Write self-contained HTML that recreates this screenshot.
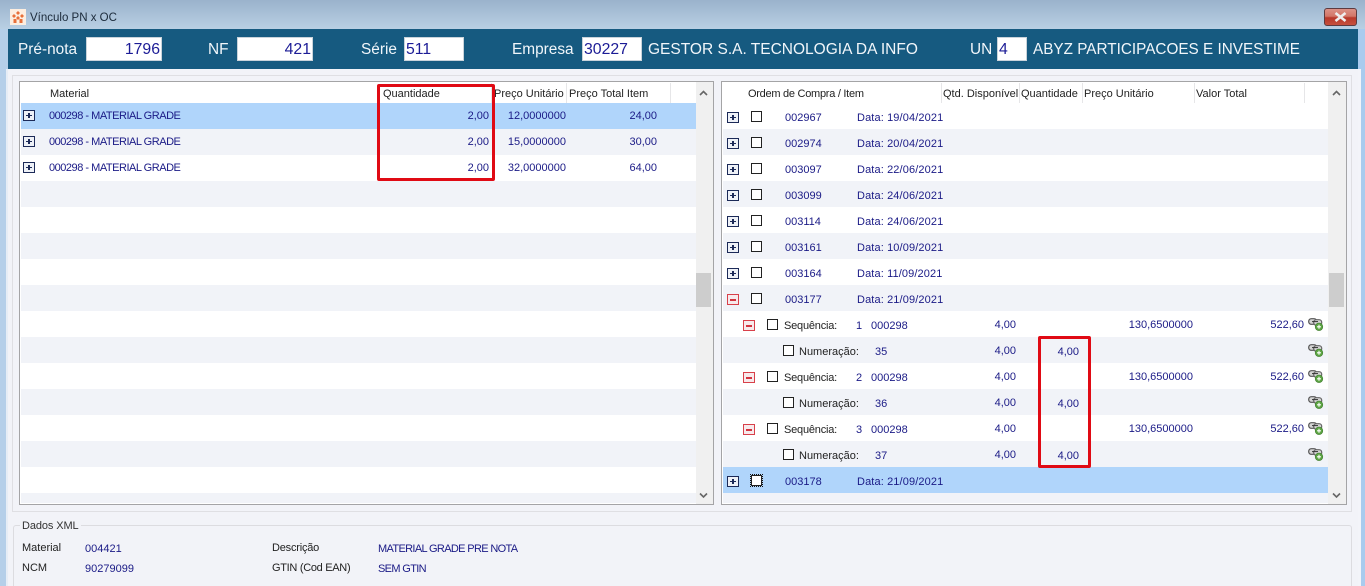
<!DOCTYPE html>
<html style="overflow:hidden;height:586px"><head><meta charset="utf-8"><style>
html,body{margin:0;padding:0}
body{width:1365px;height:586px;overflow:hidden;position:relative;background:#f2f3f8;font-family:"Liberation Sans",sans-serif;font-size:11px;color:#1a1a86}
div,span,svg{position:absolute;box-sizing:border-box}
.t{white-space:nowrap;line-height:16px;height:16px;margin-top:1px}
.l{color:#222}
.r{text-align:right}
.h{color:#f1f6fa;font-size:15.4px;line-height:20px;height:20px;white-space:nowrap;top:40px}
.i{background:#fff;border:1px solid #c9d3da;top:37px;height:24px;font-size:15.8px;line-height:24px;color:#1c1c96;padding:0 1px;white-space:nowrap}
.m{letter-spacing:-.48px}
.m2{letter-spacing:-.65px}
.d{letter-spacing:.12px}
.sep{width:1px;background:#e6e6e8;top:83px;height:20px}
.box{width:12px;height:11px;border:1px solid #1c2a58;background:#eef1f7}
.box:before{content:"";position:absolute;left:2px;right:2px;top:4px;height:1px;border-top:1px solid #1c2a58}
.box.p:after{content:"";position:absolute;top:2px;bottom:2px;left:4px;width:2px;background:#1c2a58}
.box.n{border-color:#d8404a;background:#f7eaec}
.box.n:before{left:2px;right:2px;height:2px;border:0;background:#d2343f}
.c{width:11px;height:11px;border:1px solid #222;background:#fff}
.red{border:3px solid #e00a14;border-radius:2px}
</style></head><body>
<svg width="0" height="0" style="left:0;top:0"><defs>
<g id="lk"><rect x=".7" y=".7" width="8" height="5.6" rx="2.6" fill="#d4d4d4" stroke="#555" stroke-width="1.2"/><rect x="5.7" y="1.7" width="8" height="5.6" rx="2.6" fill="#d4d4d4" stroke="#666" stroke-width="1.2"/><path d="M4 3.6h6" stroke="#333" stroke-width="1"/><circle cx="11" cy="8.8" r="3.8" fill="#5da544" stroke="#3f7d2e" stroke-width=".6"/><path d="M9 8.8h4M11 6.8v4" stroke="#fff" stroke-width="1.1"/></g>
<path id="up" d="M1 5l3.5-3.5L8 5" fill="none" stroke="#666" stroke-width="1.6"/>
<path id="dn" d="M1 1.500L4.500 5 8 1.500" fill="none" stroke="#666" stroke-width="1.6"/>
</defs></svg>

<div style="left:0;top:0;width:1365px;height:30px;background:linear-gradient(#9ab2cc,#bad0e4)"></div>
<div style="left:0;top:29px;width:8px;height:557px;background:#b5cfe9"></div>
<div style="left:1358px;top:29px;width:7px;height:557px;background:#a9cbee"></div>
<div style="left:6px;top:69px;width:2px;height:517px;background:#e6edf6"></div>
<div style="left:1358px;top:69px;width:3px;height:517px;background:#f3f4f9"></div>

<svg style="left:10px;top:9px" width="16" height="16" viewBox="0 0 16 16"><rect width="16" height="16" fill="#fdeee0"/><path d="M8 2l2 2-2 2-2-2zM4 5l2 2-2 2-2-2zM12 5l2 2-2 2-2-2zM8 7l2 2-2 2-2-2zM3.500 10h3v4h-3zM9.500 10h3v4h-3z" fill="#e8703a"/></svg>
<div class="t l" style="left:30px;top:9px;font-size:11.5px;color:#1b2a3a">Vínculo PN x OC</div>

<div style="left:1324px;top:8px;width:33px;height:18px;border:1px solid #5d3b40;border-radius:3px;background:linear-gradient(#dc9186 0,#d27668 45%,#b8382a 55%,#c6503e 100%)"></div>
<svg style="left:1333px;top:11px" width="15" height="12" viewBox="0 0 15 12"><path d="M2.500 2L12.500 10M12.500 2L2.500 10" stroke="#eee" stroke-width="2.6"/></svg>

<div style="left:8px;top:29px;width:1350px;height:40px;background:#165a80"></div>
<div class="h" style="left:18px">Pré-nota</div>
<div class="i r" style="left:86px;width:76px">1796</div>
<div class="h" style="left:208px">NF</div>
<div class="i r" style="left:237px;width:76px">421</div>
<div class="h" style="left:361px">Série</div>
<div class="i" style="left:404px;width:60px">511</div>
<div class="h" style="left:512px">Empresa</div>
<div class="i" style="left:582px;width:60px">30227</div>
<div class="h" style="left:648px;font-size:15.5px">GESTOR S.A. TECNOLOGIA DA INFO</div>
<div class="h" style="left:970px">UN</div>
<div class="i" style="left:997px;width:30px">4</div>
<div class="h" style="left:1033px;font-size:15.3px">ABYZ PARTICIPACOES E INVESTIME</div>

<div style="left:12px;top:75px;width:1340px;height:437px;border:1px solid #dfdfe3"></div>

<div style="left:19px;top:81px;width:695px;height:424px;border:1px solid #a4a4a6;background:#fff"></div>
<div style="left:21px;top:103px;width:675px;height:400px;background:repeating-linear-gradient(#fff 0,#fff 26px,#f1f3f8 26px,#f1f3f8 52px)"></div>
<div style="left:21px;top:103px;width:675px;height:26px;background:#b0d5fb"></div>
<div style="left:696px;top:82px;width:17px;height:422px;background:#f0f0f0"></div>
<div style="left:696px;top:273px;width:15px;height:34px;background:#cdcdcd"></div>
<svg style="left:699px;top:90px" width="9" height="7"><use href="#up"/></svg>
<svg style="left:699px;top:492px" width="9" height="7"><use href="#dn"/></svg>
<div class="sep" style="left:491px"></div><div class="sep" style="left:566px"></div><div class="sep" style="left:670px"></div>
<div class="t l" style="left:50px;top:85px">Material</div>
<div class="t l" style="left:383px;top:85px">Quantidade</div>
<div class="t l" style="left:494px;top:85px">Preço Unitário</div>
<div class="t l" style="left:569px;top:85px">Preço Total Item</div>

<div class="box p" style="left:23px;top:110px"></div>
<div class="t m" style="left:49px;top:107px">000298 - MATERIAL GRADE</div>
<div class="t r" style="left:430px;width:59px;top:107px">2,00</div>
<div class="t r" style="left:500px;width:66px;top:107px">12,0000000</div>
<div class="t r" style="left:600px;width:57px;top:107px">24,00</div>
<div class="box p" style="left:23px;top:136px"></div>
<div class="t m" style="left:49px;top:133px">000298 - MATERIAL GRADE</div>
<div class="t r" style="left:430px;width:59px;top:133px">2,00</div>
<div class="t r" style="left:500px;width:66px;top:133px">15,0000000</div>
<div class="t r" style="left:600px;width:57px;top:133px">30,00</div>
<div class="box p" style="left:23px;top:162px"></div>
<div class="t m" style="left:49px;top:159px">000298 - MATERIAL GRADE</div>
<div class="t r" style="left:430px;width:59px;top:159px">2,00</div>
<div class="t r" style="left:500px;width:66px;top:159px">32,0000000</div>
<div class="t r" style="left:600px;width:57px;top:159px">64,00</div>

<div class="red" style="left:377px;top:84px;width:118px;height:97px"></div>

<div style="left:721px;top:81px;width:626px;height:424px;border:1px solid #a4a4a6;background:#fff"></div>
<div style="left:723px;top:103px;width:605px;height:400px;background:repeating-linear-gradient(#fff 0,#fff 26px,#f1f3f8 26px,#f1f3f8 52px)"></div>
<div style="left:723px;top:467px;width:605px;height:26px;background:#b0d5fb"></div>
<div style="left:1328px;top:82px;width:18px;height:422px;background:#f0f0f0"></div>
<div style="left:1329px;top:273px;width:15px;height:34px;background:#cdcdcd"></div>
<svg style="left:1332px;top:90px" width="9" height="7"><use href="#up"/></svg>
<svg style="left:1332px;top:492px" width="9" height="7"><use href="#dn"/></svg>
<div class="sep" style="left:941px"></div><div class="sep" style="left:1019px"></div><div class="sep" style="left:1082px"></div><div class="sep" style="left:1194px"></div><div class="sep" style="left:1304px"></div>
<div class="t l" style="left:748px;top:85px;letter-spacing:-.27px">Ordem de Compra / Item</div>
<div class="t l" style="left:943px;top:85px">Qtd. Disponível</div>
<div class="t l" style="left:1021px;top:85px">Quantidade</div>
<div class="t l" style="left:1084px;top:85px">Preço Unitário</div>
<div class="t l" style="left:1196px;top:85px">Valor Total</div>

<div class="box p" style="left:727px;top:112px"></div><div class="c" style="left:751px;top:111px"></div><div class="t" style="left:785px;top:109px">002967</div><div class="t d" style="left:857px;top:109px">Data: 19/04/2021</div>
<div class="box p" style="left:727px;top:138px"></div><div class="c" style="left:751px;top:137px"></div><div class="t" style="left:785px;top:135px">002974</div><div class="t d" style="left:857px;top:135px">Data: 20/04/2021</div>
<div class="box p" style="left:727px;top:164px"></div><div class="c" style="left:751px;top:163px"></div><div class="t" style="left:785px;top:161px">003097</div><div class="t d" style="left:857px;top:161px">Data: 22/06/2021</div>
<div class="box p" style="left:727px;top:190px"></div><div class="c" style="left:751px;top:189px"></div><div class="t" style="left:785px;top:187px">003099</div><div class="t d" style="left:857px;top:187px">Data: 24/06/2021</div>
<div class="box p" style="left:727px;top:216px"></div><div class="c" style="left:751px;top:215px"></div><div class="t" style="left:785px;top:213px">003114</div><div class="t d" style="left:857px;top:213px">Data: 24/06/2021</div>
<div class="box p" style="left:727px;top:242px"></div><div class="c" style="left:751px;top:241px"></div><div class="t" style="left:785px;top:239px">003161</div><div class="t d" style="left:857px;top:239px">Data: 10/09/2021</div>
<div class="box p" style="left:727px;top:268px"></div><div class="c" style="left:751px;top:267px"></div><div class="t" style="left:785px;top:265px">003164</div><div class="t d" style="left:857px;top:265px">Data: 11/09/2021</div>
<div class="box n" style="left:727px;top:294px"></div><div class="c" style="left:751px;top:293px"></div><div class="t" style="left:785px;top:291px">003177</div><div class="t d" style="left:857px;top:291px">Data: 21/09/2021</div>

<div class="box n" style="left:743px;top:320px"></div><div class="c" style="left:767px;top:319px"></div><div class="t l" style="left:784px;top:317px;letter-spacing:-.2px">Sequência:</div><div class="t" style="left:856px;top:317px">1</div><div class="t" style="left:871px;top:317px">000298</div><div class="t r" style="left:970px;width:46px;top:316px">4,00</div><div class="t r" style="left:1120px;width:73px;top:316px">130,6500000</div><div class="t r" style="left:1250px;width:54px;top:316px">522,60</div><svg style="left:1308px;top:318px" width="16" height="14"><use href="#lk"/></svg>
<div class="c" style="left:783px;top:345px"></div><div class="t l" style="left:799px;top:343px">Numeração:</div><div class="t" style="left:875px;top:343px">35</div><div class="t r" style="left:970px;width:46px;top:342px">4,00</div><div class="t r" style="left:1040px;width:39px;top:343px">4,00</div><svg style="left:1308px;top:344px" width="16" height="14"><use href="#lk"/></svg>
<div class="box n" style="left:743px;top:372px"></div><div class="c" style="left:767px;top:371px"></div><div class="t l" style="left:784px;top:369px;letter-spacing:-.2px">Sequência:</div><div class="t" style="left:856px;top:369px">2</div><div class="t" style="left:871px;top:369px">000298</div><div class="t r" style="left:970px;width:46px;top:368px">4,00</div><div class="t r" style="left:1120px;width:73px;top:368px">130,6500000</div><div class="t r" style="left:1250px;width:54px;top:368px">522,60</div><svg style="left:1308px;top:370px" width="16" height="14"><use href="#lk"/></svg>
<div class="c" style="left:783px;top:397px"></div><div class="t l" style="left:799px;top:395px">Numeração:</div><div class="t" style="left:875px;top:395px">36</div><div class="t r" style="left:970px;width:46px;top:394px">4,00</div><div class="t r" style="left:1040px;width:39px;top:395px">4,00</div><svg style="left:1308px;top:396px" width="16" height="14"><use href="#lk"/></svg>
<div class="box n" style="left:743px;top:424px"></div><div class="c" style="left:767px;top:423px"></div><div class="t l" style="left:784px;top:421px;letter-spacing:-.2px">Sequência:</div><div class="t" style="left:856px;top:421px">3</div><div class="t" style="left:871px;top:421px">000298</div><div class="t r" style="left:970px;width:46px;top:420px">4,00</div><div class="t r" style="left:1120px;width:73px;top:420px">130,6500000</div><div class="t r" style="left:1250px;width:54px;top:420px">522,60</div><svg style="left:1308px;top:422px" width="16" height="14"><use href="#lk"/></svg>
<div class="c" style="left:783px;top:449px"></div><div class="t l" style="left:799px;top:447px">Numeração:</div><div class="t" style="left:875px;top:447px">37</div><div class="t r" style="left:970px;width:46px;top:446px">4,00</div><div class="t r" style="left:1040px;width:39px;top:447px">4,00</div><svg style="left:1308px;top:448px" width="16" height="14"><use href="#lk"/></svg>
<div class="box p" style="left:727px;top:476px"></div><div class="c" style="left:751px;top:475px;outline:1px dotted #111"></div><div class="t" style="left:785px;top:473px">003178</div><div class="t d" style="left:857px;top:473px">Data: 21/09/2021</div>

<div class="red" style="left:1038px;top:336px;width:53px;height:132px"></div>

<div style="left:13px;top:525px;width:1339px;height:61px;border:1px solid #dcdce0;border-bottom:0;border-radius:3px 3px 0 0"></div>
<div class="t l" style="left:20px;top:517px;background:#f2f3f8;padding:0 2px;color:#333;letter-spacing:-.1px">Dados XML</div>
<div class="t l" style="left:22px;top:539px">Material</div>
<div class="t" style="left:85px;top:540px">004421</div>
<div class="t l" style="left:272px;top:539px;letter-spacing:-.2px">Descrição</div>
<div class="t m2" style="left:378px;top:540px">MATERIAL GRADE PRE NOTA</div>
<div class="t l" style="left:22px;top:559px">NCM</div>
<div class="t" style="left:85px;top:560px">90279099</div>
<div class="t l" style="left:272px;top:559px;letter-spacing:-.3px">GTIN (Cod EAN)</div>
<div class="t m2" style="left:378px;top:560px">SEM GTIN</div>
</body></html>
